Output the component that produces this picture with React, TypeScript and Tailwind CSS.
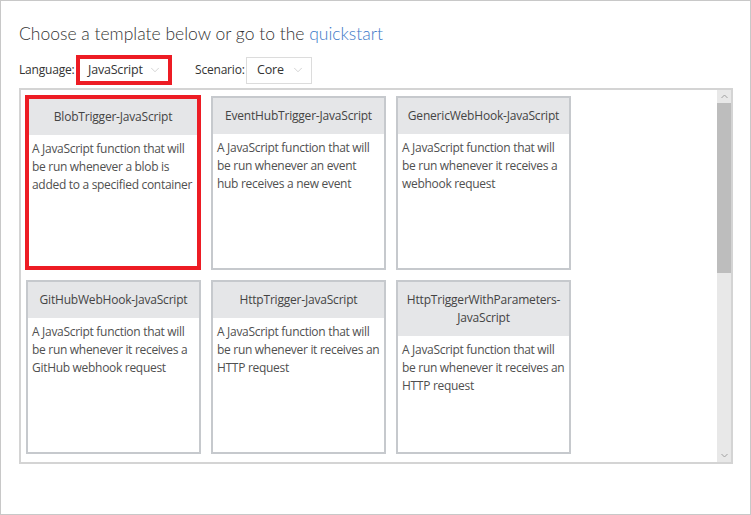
import { ChevronDown } from 'lucide-react'

type Template = { name: string; lines: string[]; desc: string; selected?: boolean }

const templates: Template[] = [
  { name: 'BlobTrigger-JavaScript', lines: ['BlobTrigger-JavaScript'], desc: 'A JavaScript function that will be run whenever a blob is added to a specified container', selected: true },
  { name: 'EventHubTrigger-JavaScript', lines: ['EventHubTrigger-JavaScript'], desc: 'A JavaScript function that will be run whenever an event hub receives a new event' },
  { name: 'GenericWebHook-JavaScript', lines: ['GenericWebHook-JavaScript'], desc: 'A JavaScript function that will be run whenever it receives a webhook request' },
  { name: 'GitHubWebHook-JavaScript', lines: ['GitHubWebHook-JavaScript'], desc: 'A JavaScript function that will be run whenever it receives a GitHub webhook request' },
  { name: 'HttpTrigger-JavaScript', lines: ['HttpTrigger-JavaScript'], desc: 'A JavaScript function that will be run whenever it receives an HTTP request' },
  { name: 'HttpTriggerWithParameters-JavaScript', lines: ['HttpTriggerWithParameters-', 'JavaScript'], desc: 'A JavaScript function that will be run whenever it receives an HTTP request' },
]

function Select({ value, highlighted }: { value: string; highlighted?: boolean }) {
  return (
    <div
      className={
        highlighted
          ? 'flex items-center h-[30px] w-[96px] border-4 border-[#ed1c24] bg-white pl-[8px] pr-[6px]'
          : 'flex items-center h-[27px] w-[66px] border border-[#dcdcdc] bg-white pl-[10px] pr-[6px]'
      }
    >
      <span className="flex-1 text-[12.5px] tracking-[-0.2px] text-[#333]">{value}</span>
      <ChevronDown size={14} strokeWidth={1.25} className="text-[#c4c4c4]" />
    </div>
  )
}

function Card({ t }: { t: Template }) {
  return (
    <div
      className={
        t.selected
          ? 'w-[176px] h-[175px] border-4 border-[#ed1c24] bg-white flex flex-col -m-[1px]'
          : 'w-[175px] h-[174px] border-2 border-[#c6c9cd] bg-white flex flex-col'
      }
    >
      <div className="bg-[#e5e6e8] py-[9px] text-center text-[12px] tracking-[-0.2px] leading-[18px] text-[#444]">
        {t.lines.map((l) => (
          <div key={l}>{l}</div>
        ))}
      </div>
      <div
        className={
          t.selected
            ? 'pl-[3px] pr-0 pt-[5px] text-[12px] tracking-[-0.3px] leading-[18px] text-[#505050]'
            : 'pl-[4px] pr-[4px] pt-[5px] text-[12px] tracking-[-0.3px] leading-[18px] text-[#505050]'
        }
      >
        {t.desc}
      </div>
    </div>
  )
}

export default function App() {
  return (
    <div
      className="w-[751px] h-[515px] border border-[#c8c8c8] bg-white pt-[21px] px-[18px]"
      style={{ fontFamily: '"Open Sans", "Noto Sans", sans-serif' }}
    >
      <h1 className="text-[17.5px] leading-[24px] font-light text-[#333]" style={{ fontFamily: 'Lato, sans-serif' }}>
        Choose a template below or go to the <span className="text-[#3b78c7]">quickstart</span>
      </h1>

      <div className="flex items-center mt-[8px] h-[32px]">
        <span className="text-[12px] tracking-[-0.2px] text-[#333] w-[57px]">Language:</span>
        <Select value="JavaScript" highlighted />
        <span className="text-[12px] tracking-[-0.2px] text-[#333] ml-[23px] w-[51px]">Scenario:</span>
        <Select value="Core" />
      </div>

      <div className="mt-[2px] w-[714px] h-[376px] border-2 border-[#d4d4d4] flex overflow-hidden">
        <div className="flex-1 pl-[5px] pt-[6px]">
          <div className="grid grid-cols-[175px_175px_175px] gap-x-[10px] gap-y-[10px]">
            {templates.map((t) => (
              <Card key={t.name} t={t} />
            ))}
          </div>
        </div>
        <div className="w-[14px] bg-[#e8e8e8] flex flex-col">
          <div className="h-[13px] flex items-center justify-center text-[#a0a0a0]">
            <svg width="7" height="5" viewBox="0 0 7 5">
              <path d="M0.5 4 L3.5 1 L6.5 4" fill="none" stroke="currentColor" strokeWidth="1" />
            </svg>
          </div>
          <div className="h-[170px] bg-[#bdbdbd]" />
          <div className="flex-1" />
          <div className="h-[13px] flex items-center justify-center text-[#a0a0a0]">
            <svg width="7" height="5" viewBox="0 0 7 5">
              <path d="M0.5 1 L3.5 4 L6.5 1" fill="none" stroke="currentColor" strokeWidth="1" />
            </svg>
          </div>
        </div>
      </div>
    </div>
  )
}
